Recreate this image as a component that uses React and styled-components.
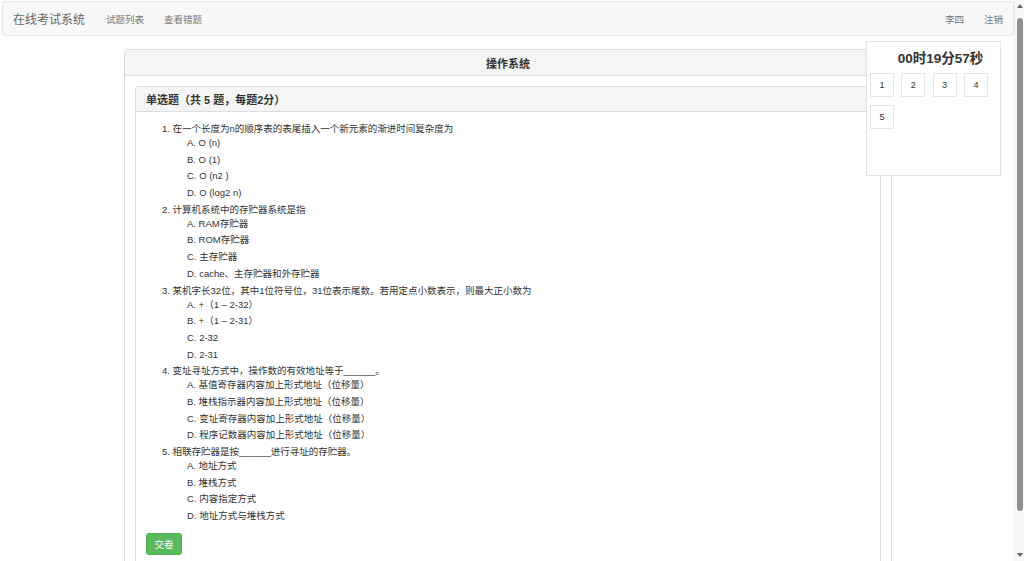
import React from "react";
import styled, { createGlobalStyle } from "styled-components";

const GlobalStyle = createGlobalStyle`
  body {
    margin: 0;
    padding-right: 10px;
    background: #fff;
    color: #333;
    font-family: "Liberation Sans", Arial, "Noto Sans CJK SC", sans-serif;
  }
`;

const Navbar = styled.nav`
  margin: 1px 0 0 2px;
  height: 33px;
  background: #f8f8f8;
  border: 1px solid #e7e7e7;
  border-radius: 3px;
  display: flex;
  align-items: center;
  padding: 0 0 0 10px;
`;

const Brand = styled.span`
  font-size: 12px;
  color: #666;
  margin-right: 11px;
`;

const NavLink = styled.span`
  font-size: 9.5px;
  color: #777;
  padding: 0 10px;
`;

const Spacer = styled.div`
  flex: 1;
`;

const Panel = styled.section`
  border: 1px solid #ddd;
  border-radius: 3px;
  background: #fff;
`;

const OuterPanel = styled(Panel)`
  width: 766px;
  margin: 13px auto 40px;
  position: relative;
  left: 1px;
`;

const PanelHeading = styled.div`
  background: #f5f5f5;
  border-bottom: 1px solid #ddd;
  height: ${(p) => p.$h}px;
  display: flex;
  align-items: center;
  justify-content: ${(p) => (p.$center ? "center" : "flex-start")};
  padding: 0 10px;
  font-size: 11px;
  font-weight: bold;
  color: #333;
`;

const OuterBody = styled.div`
  padding: 10px;
`;

const InnerBody = styled.div`
  padding: 10px 10px 10px;
`;

const Question = styled.div`
  font-size: 9.5px;
  line-height: 14px;
  color: #333;
`;

const QTitle = styled.div`
  padding-left: 16px;
`;

const Option = styled.div`
  padding-left: 41px;
  margin-bottom: 2.7px;
`;

const SubmitButton = styled.button`
  margin-top: 7px;
  width: 36px;
  height: 22px;
  background: #5cb85c;
  border: 1px solid #4cae4c;
  border-radius: 3px;
  color: #fff;
  font-size: 9.5px;
  font-family: inherit;
  padding: 0;
`;

const TimerBox = styled.aside`
  position: fixed;
  top: 41px;
  right: 23px;
  width: 135px;
  height: 135px;
  border: 1px solid #e3e3e3;
  background: #fff;
  box-sizing: border-box;
  padding: 8px 3px 0;
`;

const TimerText = styled.div`
  font-size: 13.5px;
  font-weight: bold;
  color: #333;
  text-align: center;
  padding-left: 14px;
  line-height: 18px;
  margin-bottom: 5px;
`;

const NumGrid = styled.div`
  display: grid;
  grid-template-columns: repeat(4, 24px);
  column-gap: 7.3px;
  row-gap: 8px;
`;

const NumButton = styled.div`
  width: 24px;
  height: 24px;
  box-sizing: border-box;
  border: 1px solid #e6e6e6;
  display: flex;
  align-items: center;
  justify-content: center;
  font-size: 9px;
  color: #333;
`;

/* window scrollbar, drawn over the right edge of the page */
const ScrollTrack = styled.div`
  position: fixed;
  top: 0;
  right: 0;
  bottom: 0;
  width: 10px;
  background: #f8f8f8;
  border-left: 1px solid #efefef;
  box-sizing: border-box;
`;

const ScrollThumb = styled.div`
  position: absolute;
  top: 18px;
  left: 2px;
  width: 6px;
  height: 493px;
  border-radius: 3px;
  background: #8f8f8f;
`;

const ScrollArrow = styled.div`
  position: absolute;
  left: 2px;
  width: 0;
  height: 0;
  border-left: 3px solid transparent;
  border-right: 3px solid transparent;
  ${(p) =>
    p.$up
      ? "top: 4px; border-bottom: 4px solid #666;"
      : "bottom: 4px; border-top: 4px solid #666;"}
`;

const questions = [
  {
    title: "1. 在一个长度为n的顺序表的表尾插入一个新元素的渐进时间复杂度为",
    options: ["A. O (n)", "B. O (1)", "C. O (n2 )", "D. O (log2 n)"],
  },
  {
    title: "2. 计算机系统中的存贮器系统是指",
    options: ["A. RAM存贮器", "B. ROM存贮器", "C. 主存贮器", "D. cache、主存贮器和外存贮器"],
  },
  {
    title: "3. 某机字长32位，其中1位符号位，31位表示尾数。若用定点小数表示，则最大正小数为",
    options: ["A. +（1 – 2-32）", "B. +（1 – 2-31）", "C. 2-32", "D. 2-31"],
  },
  {
    title: "4. 变址寻址方式中，操作数的有效地址等于______。",
    options: [
      "A. 基值寄存器内容加上形式地址（位移量）",
      "B. 堆栈指示器内容加上形式地址（位移量）",
      "C. 变址寄存器内容加上形式地址（位移量）",
      "D. 程序记数器内容加上形式地址（位移量）",
    ],
  },
  {
    title: "5. 相联存贮器是按______进行寻址的存贮器。",
    options: ["A. 地址方式", "B. 堆栈方式", "C. 内容指定方式", "D. 地址方式与堆栈方式"],
  },
];

export default function App() {
  return (
    <>
      <GlobalStyle />
      <Navbar>
        <Brand>在线考试系统</Brand>
        <NavLink>试题列表</NavLink>
        <NavLink>查看错题</NavLink>
        <Spacer />
        <NavLink>李四</NavLink>
        <NavLink>注销</NavLink>
      </Navbar>
      <OuterPanel>
        <PanelHeading $h={25} $center>操作系统</PanelHeading>
        <OuterBody>
          <Panel>
            <PanelHeading $h={24}>单选题（共 5 题，每题2分）</PanelHeading>
            <InnerBody>
              {questions.map((q) => (
                <Question key={q.title}>
                  <QTitle>{q.title}</QTitle>
                  {q.options.map((o) => (
                    <Option key={o}>{o}</Option>
                  ))}
                </Question>
              ))}
              <SubmitButton>交卷</SubmitButton>
            </InnerBody>
          </Panel>
        </OuterBody>
      </OuterPanel>
      <TimerBox>
        <TimerText>00时19分57秒</TimerText>
        <NumGrid>
          {[1, 2, 3, 4, 5].map((n) => (
            <NumButton key={n}>{n}</NumButton>
          ))}
        </NumGrid>
      </TimerBox>
      <ScrollTrack>
        <ScrollArrow $up />
        <ScrollThumb />
        <ScrollArrow />
      </ScrollTrack>
    </>
  );
}
